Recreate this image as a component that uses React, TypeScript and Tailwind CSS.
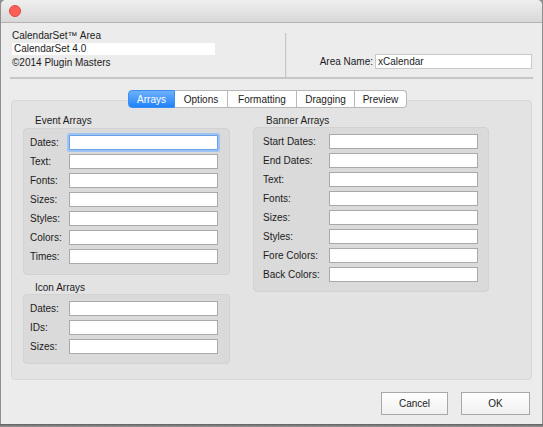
import React from 'react';

const EVENT_ROWS = ['Dates:', 'Text:', 'Fonts:', 'Sizes:', 'Styles:', 'Colors:', 'Times:'];
const BANNER_ROWS = ['Start Dates:', 'End Dates:', 'Text:', 'Fonts:', 'Sizes:', 'Styles:', 'Fore Colors:', 'Back Colors:'];
const ICON_ROWS = ['Dates:', 'IDs:', 'Sizes:'];
const TABS = [
  { label: 'Arrays', w: 'w-[47px]' },
  { label: 'Options', w: 'w-[53px]' },
  { label: 'Formatting', w: 'w-[69px]' },
  { label: 'Dragging', w: 'w-[58px]' },
  { label: 'Preview', w: 'w-[52px]' },
];

function Field({ focused = false }: { focused?: boolean }) {
  return (
    <div
      className={
        focused
          ? 'w-[149px] h-[15px] bg-white border border-[#6a9fe4] shadow-[0_0_0_2px_#9cc3f3] rounded-[1px]'
          : 'w-[149px] h-[15px] bg-white border border-[#a9a9a9]'
      }
    />
  );
}

function ArrayBox({ rows, labelW, focusFirst = false, className = '' }: { rows: string[]; labelW: string; focusFirst?: boolean; className?: string }) {
  return (
    <div className={`bg-[#dadada] border border-[#d2d2d2] rounded-[4px] pt-[4px] ${className}`}>
      {rows.map((r, i) => (
        <div key={r + i} className="flex items-center h-[19px]">
          <div className={`${labelW} shrink-0`}>{r}</div>
          <Field focused={focusFirst && i === 0} />
        </div>
      ))}
    </div>
  );
}

export default function App() {
  return (
    <div
      className="w-[543px] h-[427px] bg-[#8f8f8f] text-[#1b1b1b] text-[10px] leading-[13px] overflow-hidden"
      style={{ fontFamily: '"Liberation Sans", Arial, sans-serif' }}
    >
      <div className="ml-px w-[541px] h-[424px] bg-[#ececec] rounded-t-[5px] overflow-hidden flex flex-col">
        {/* title bar */}
        <div className="h-[23px] shrink-0 flex items-center pl-[8px] bg-gradient-to-b from-[#efefef] to-[#d8d8d8] border-b border-[#b3b3b3]">
          <div className="w-[12px] h-[12px] rounded-full bg-[#fc5f57] border border-[#e2463f]" />
        </div>

        {/* header */}
        <div className="flex h-[56px] mx-[9px] border-b-2 border-[#c6c6c6] shrink-0">
          <div className="w-[275px] pl-[2px] pt-[6px]">
            <div>CalendarSet™ Area</div>
            <div className="mt-px w-[203px] h-[12px] bg-white pl-[2px] leading-[12px]">CalendarSet 4.0</div>
            <div className="mt-[1px]">©2014 Plugin Masters</div>
          </div>
          <div className="w-[2px] mt-[10px] bg-[#c6c6c6] border-r border-[#e4e4e4]" />
          <div className="flex-1 flex items-end justify-end gap-[2px] pb-[8px] pr-px">
            <div className="leading-[15px]">Area Name:</div>
            <div className="w-[157px] h-[15px] bg-white border border-[#c9c9c9] pl-[2px] leading-[13px]">xCalendar</div>
          </div>
        </div>

        {/* tabs */}
        <div className="mt-[11px] ml-[127px] flex relative z-10 -mb-[8px] h-[18px]">
          {TABS.map((t, i) => (
            <div
              key={t.label}
              className={
                i === 0
                  ? `${t.w} flex items-center justify-center text-white rounded-l-[4px] bg-gradient-to-b from-[#6db1fb] to-[#1b81fa] border border-[#3c8ef0]`
                  : `${t.w} flex items-center justify-center bg-white border-y border-r border-[#b8b8b8] ${i === TABS.length - 1 ? 'rounded-r-[4px]' : ''}`
              }
            >
              {t.label}
            </div>
          ))}
        </div>

        {/* tab panel */}
        <div className="ml-[10px] w-[521px] h-[280px] bg-[#e3e3e3] border border-[#d7d7d7] rounded-[4px] flex pl-[11px] pt-[13px]">
          <div className="w-[207px]">
            <div className="pl-[12px]">Event Arrays</div>
            <ArrayBox rows={EVENT_ROWS} labelW="w-[45px] pl-[6px]" focusFirst className="mt-px pb-[8px]" />
            <div className="pl-[12px] mt-[6px]">Icon Arrays</div>
            <ArrayBox rows={ICON_ROWS} labelW="w-[45px] pl-[6px]" className="pb-[7px]" />
          </div>
          <div className="ml-[23px] w-[236px]">
            <div className="pl-[13px]">Banner Arrays</div>
            <ArrayBox rows={BANNER_ROWS} labelW="w-[75px] pl-[9px]" className="pb-[7px]" />
          </div>
        </div>

        {/* buttons */}
        <div className="flex justify-end gap-[13px] pr-[12px] mt-[12px]">
          <button className="w-[67px] h-[23px] border border-[#a8a8a8] bg-gradient-to-b from-[#ffffff] to-[#f0f0f0] text-[10px]">Cancel</button>
          <button className="w-[69px] h-[23px] border border-[#a8a8a8] bg-gradient-to-b from-[#ffffff] to-[#f0f0f0] text-[10px]">OK</button>
        </div>
      </div>
      <div className="h-[3px] bg-gradient-to-b from-[#5e5e5e] to-[#9a9a9a]" />
    </div>
  );
}
